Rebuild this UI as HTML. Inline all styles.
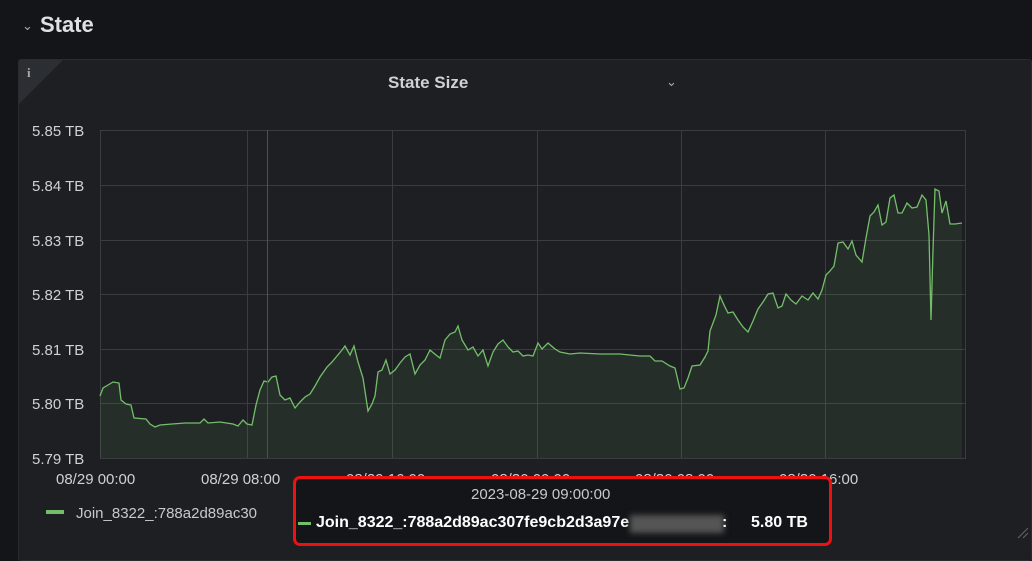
<!DOCTYPE html>
<html><head><style>
body{margin:0;width:1032px;height:552px;background:#141518;overflow:hidden;font-family:"Liberation Sans",sans-serif;position:relative}
.t{position:absolute;color:#d8d9da;white-space:nowrap}
</style></head><body>
<div class="t" style="left:22px;top:18px;font-size:13px;color:#aaa">&#8964;</div>
<div class="t" style="left:40px;top:12px;font-size:22px;font-weight:bold;color:#e0e0e3">State</div>
<div style="position:absolute;left:18px;top:59px;width:1012px;height:500px;background:#1e1f23;border:1px solid #2a2b2f;border-radius:3px"></div>
<svg style="position:absolute;left:19px;top:60px" width="46" height="46"><polygon points="0,0 44,0 0,44" fill="#2b2e33"/><text x="8" y="17" fill="#aaa" font-size="13" font-family="Liberation Serif" font-weight="bold">i</text></svg>
<div class="t" style="left:388px;top:73px;font-size:17px;font-weight:bold;color:#d0d1d4">State Size</div>
<div class="t" style="left:666px;top:74px;font-size:13px;color:#aaa">&#8964;</div>
<svg style="position:absolute;left:0;top:0" width="1032" height="552">
<g stroke="#3b3c40" stroke-width="1">
<line x1="100" y1="130.5" x2="966" y2="130.5"/><line x1="100" y1="185.5" x2="966" y2="185.5"/><line x1="100" y1="240.5" x2="966" y2="240.5"/><line x1="100" y1="294.5" x2="966" y2="294.5"/><line x1="100" y1="349.5" x2="966" y2="349.5"/><line x1="100" y1="403.5" x2="966" y2="403.5"/><line x1="100" y1="458.5" x2="966" y2="458.5"/>
<line x1="100.5" y1="130" x2="100.5" y2="458"/><line x1="247.5" y1="130" x2="247.5" y2="458"/><line x1="392.5" y1="130" x2="392.5" y2="458"/><line x1="537.5" y1="130" x2="537.5" y2="458"/><line x1="681.5" y1="130" x2="681.5" y2="458"/><line x1="825.5" y1="130" x2="825.5" y2="458"/><line x1="965.5" y1="130" x2="965.5" y2="458"/>
</g>
<g font-size="15" fill="#d0d1d4" font-family="Liberation Sans">
<text x="32" y="136">5.85 TB</text><text x="32" y="191">5.84 TB</text><text x="32" y="246">5.83 TB</text><text x="32" y="300">5.82 TB</text><text x="32" y="355">5.81 TB</text><text x="32" y="409">5.80 TB</text><text x="32" y="464">5.79 TB</text>
<text x="56" y="484">08/29 00:00</text><text x="201" y="484">08/29 08:00</text><text x="346" y="484">08/29 16:00</text><text x="491" y="484">08/30 00:00</text><text x="635" y="484">08/30 08:00</text><text x="779" y="484">08/30 16:00</text>
</g>
<polygon fill="#73bf69" fill-opacity="0.1" points="100,458 100,396 103,388 108,385 113,382 119,383 121,400 126,404 131,405 134,418 146,419 150,424 155,427 160,425 172,424 185,423 200,423 204,419 208,423 220,422 233,424 238,426 243,420 247,424 252,425 256,405 260,390 264,381 268,382 272,377 276,376 280,395 285,400 290,398 295,408 300,402 305,397 310,394 315,386 320,377 327,367 332,362 337,356 342,350 345,346 350,355 354,346 358,362 363,378 368,411 372,404 375,396 378,372 382,370 386,360 390,374 395,370 400,363 405,357 410,354 415,374 420,365 425,360 430,350 436,355 440,358 445,340 450,334 455,332 458,326 462,340 468,350 473,347 478,356 483,350 488,366 493,352 498,344 503,340 508,347 513,352 518,351 523,356 528,355 533,356 538,343 542,349 548,343 555,349 560,352 570,354 580,353 600,354 620,354 640,356 650,356 655,361 662,361 670,366 675,368 680,389 684,388 688,378 692,366 700,365 705,357 708,351 710,331 713,323 716,315 720,296 724,305 728,313 733,312 738,320 743,327 748,332 753,321 758,309 763,302 768,294 773,293 778,308 782,306 786,294 791,300 796,304 802,296 808,300 813,293 818,299 822,290 826,275 830,271 834,266 838,243 843,242 848,249 852,241 856,255 862,262 866,238 870,216 874,212 878,205 882,225 886,222 890,198 894,195 898,213 902,213 907,203 912,208 917,207 922,195 926,200 929,235 931,320 933,250 935,189 939,191 942,213 946,201 950,224 955,224 962,223 962,458"/>
<polyline fill="none" stroke="#73bf69" stroke-width="1.3" points="100,396 103,388 108,385 113,382 119,383 121,400 126,404 131,405 134,418 146,419 150,424 155,427 160,425 172,424 185,423 200,423 204,419 208,423 220,422 233,424 238,426 243,420 247,424 252,425 256,405 260,390 264,381 268,382 272,377 276,376 280,395 285,400 290,398 295,408 300,402 305,397 310,394 315,386 320,377 327,367 332,362 337,356 342,350 345,346 350,355 354,346 358,362 363,378 368,411 372,404 375,396 378,372 382,370 386,360 390,374 395,370 400,363 405,357 410,354 415,374 420,365 425,360 430,350 436,355 440,358 445,340 450,334 455,332 458,326 462,340 468,350 473,347 478,356 483,350 488,366 493,352 498,344 503,340 508,347 513,352 518,351 523,356 528,355 533,356 538,343 542,349 548,343 555,349 560,352 570,354 580,353 600,354 620,354 640,356 650,356 655,361 662,361 670,366 675,368 680,389 684,388 688,378 692,366 700,365 705,357 708,351 710,331 713,323 716,315 720,296 724,305 728,313 733,312 738,320 743,327 748,332 753,321 758,309 763,302 768,294 773,293 778,308 782,306 786,294 791,300 796,304 802,296 808,300 813,293 818,299 822,290 826,275 830,271 834,266 838,243 843,242 848,249 852,241 856,255 862,262 866,238 870,216 874,212 878,205 882,225 886,222 890,198 894,195 898,213 902,213 907,203 912,208 917,207 922,195 926,200 929,235 931,320 933,250 935,189 939,191 942,213 946,201 950,224 955,224 962,223"/>
<rect x="267" y="130" width="1" height="328" fill="#c02020"/>
<rect x="46" y="510" width="18" height="4" fill="#73bf69"/>
<text x="76" y="518" font-size="15" fill="#c8c9cc">Join_8322_:788a2d89ac30</text>
<path d="M1018 538 L1028 528 M1023 538 L1028 533" stroke="#666" stroke-width="1"/>
</svg>
<div style="position:absolute;left:293px;top:476px;width:533px;height:64px;background:#141518;border:3px solid #ee1111;border-radius:7px"></div>
<div class="t" style="left:471px;top:486px;font-size:15px;color:#c8c9cc">2023-08-29 09:00:00</div>
<div style="position:absolute;left:298px;top:522px;width:13px;height:3px;background:#73bf69"></div>
<div class="t" style="left:316px;top:514px;font-size:16px;font-weight:bold;color:#fff">Join_8322_:788a2d89ac307fe9cb2d3a97e</div>
<div style="position:absolute;left:630px;top:515px;width:94px;height:18px;background:#555;filter:blur(3px)"></div>
<div class="t" style="left:722px;top:514px;font-size:16px;font-weight:bold;color:#fff">:</div>
<div class="t" style="left:751px;top:514px;font-size:16px;font-weight:bold;color:#fff">5.80 TB</div>
</body></html>
